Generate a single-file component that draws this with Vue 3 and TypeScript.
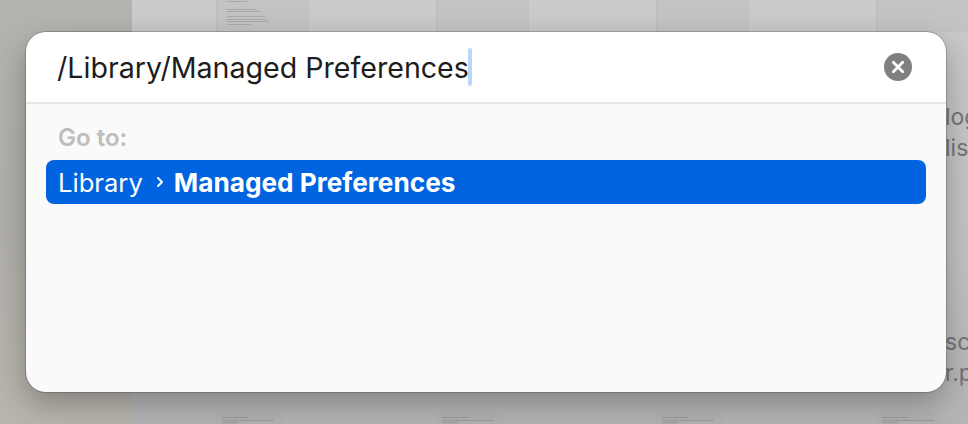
<script setup lang="ts">
const bottomThumbs = [0, 1, 2, 3]
const topThumbs = [
  { lines: [20, 0, 0, 30, 34, 0, 38, 40, 42, 24] },
  { lines: [] },
  { lines: [] },
  { lines: [] },
]
</script>

<template>
  <div class="stage">
    <aside class="sidebar"></aside>
    <main class="content">
      <div class="thumb-row top">
        <div v-for="(thumb, i) in topThumbs" :key="i" class="page-top">
          <div v-for="(w, j) in thumb.lines" :key="j" class="tiny" :style="{ width: w + 'px' }"></div>
        </div>
      </div>
      <div class="labels">
        <div class="label-group first"><span>log</span><span>lis</span></div>
        <div class="label-group second"><span>sc</span><span>r.p</span></div>
      </div>
      <div class="thumb-row bottom">
        <div v-for="n in bottomThumbs" :key="n" class="page-bottom">
          <div class="tiny wide"></div>
          <div class="tiny wider"></div>
          <div class="tiny short"></div>
        </div>
      </div>
    </main>

    <section class="dialog">
      <header class="search">
        <div class="field">
          <span class="path">/Library/Managed Preferences</span><span class="caret"></span>
        </div>
        <button class="clear" aria-label="Clear">
          <svg width="28" height="28" viewBox="0 0 28 28">
            <circle cx="14" cy="14" r="14" fill="#808080" />
            <path d="M9.3 9.3 18.7 18.7M18.7 9.3 9.3 18.7" stroke="#fff" stroke-width="2.7" stroke-linecap="round" fill="none" />
          </svg>
        </button>
      </header>
      <div class="results">
        <div class="goto">Go to:</div>
        <div class="row">
          <span class="crumb">Library</span>
          <svg class="chevron" width="8" height="12" viewBox="0 0 8 12">
            <path d="M2 2 6 6 2 10" stroke="#fff" stroke-width="2" stroke-linecap="round" stroke-linejoin="round" fill="none" />
          </svg>
          <span class="current">Managed Preferences</span>
        </div>
      </div>
    </section>
  </div>
</template>

<style scoped>
.stage {
  position: relative;
  display: flex;
  width: 968px;
  height: 424px;
  overflow: hidden;
  font-family: Inter, "Liberation Sans", sans-serif;
}
.sidebar {
  width: 132px;
  flex: none;
  background: linear-gradient(180deg, #b4b3af 0%, #b0aeaa 50%, #b8b5ad 100%);
}
.content {
  flex: 1;
  display: flex;
  flex-direction: column;
  background: linear-gradient(180deg, #cbcbcb 0%, #c8c8c8 10%, #c2c2c2 60%, #b4b4b4 100%);
}
.thumb-row {
  display: flex;
  padding-left: 84px;
}
.thumb-row.top {
  height: 32px;
  flex: none;
  gap: 127px;
}
.page-top {
  width: 93px;
  flex: none;
  padding: 1px 0 0 10px;
  background: #c3c3c3;
  border-left: 1px solid #bcbcbc;
  border-right: 1px solid #c0c0c0;
  box-sizing: border-box;
}
.tiny {
  height: 1px;
  margin-bottom: 1.5px;
  background: #a8a8a8;
}
.labels {
  flex: 1;
  display: flex;
  flex-direction: column;
  align-items: flex-start;
  padding: 70px 0 0 813px;
  color: #757575;
  font-size: 23px;
  line-height: 31px;
}
.label-group {
  display: flex;
  flex-direction: column;
}
.label-group.second {
  margin-top: 163px;
}
.thumb-row.bottom {
  height: 12px;
  flex: none;
  gap: 150px;
}
.page-bottom {
  width: 70px;
  flex: none;
  height: 12px;
  padding: 5px 0 0 6px;
  box-sizing: border-box;
  background: #b2b2b2;
  clip-path: polygon(0 0, 87% 0, 100% 100%, 0 100%);
}
.tiny.wide { width: 26px; background: #9a9a9a; }
.tiny.wider { width: 52px; background: #9a9a9a; }
.tiny.short { width: 16px; background: #9a9a9a; }
.dialog {
  position: absolute;
  left: 26px;
  top: 32px;
  width: 920px;
  height: 360px;
  display: flex;
  flex-direction: column;
  border-radius: 20px;
  overflow: hidden;
  background: #fafafa;
}
.stage::after {
  content: "";
  position: absolute;
  left: 26px;
  top: 32px;
  width: 920px;
  height: 360px;
  border-radius: 20px;
  box-shadow: 0 0 0 1px rgba(0, 0, 0, 0.18), 0 12px 30px rgba(0, 0, 0, 0.28);
  pointer-events: none;
}
.search {
  height: 70px;
  flex: none;
  display: flex;
  align-items: center;
  justify-content: space-between;
  padding: 0 34px 0 31px;
  background: #fff;
  border-bottom: 2px solid #e6e6e6;
}
.field {
  display: flex;
  align-items: center;
}
.path {
  color: #1d1d1d;
  font-size: 28.6px;
  line-height: 38px;
  position: relative;
  top: 1px;
}
.caret {
  width: 4px;
  height: 38px;
  margin-left: -1px;
  border-radius: 2px;
  background: #bdd5f8;
}
.clear {
  width: 28px;
  height: 28px;
  padding: 0;
  border: 0;
  background: none;
  display: block;
}
.clear svg {
  display: block;
}
.results {
  flex: 1;
  padding: 18px 20px 0;
}
.goto {
  padding-left: 12px;
  color: #bdbdbd;
  font-size: 24px;
  font-weight: 600;
  line-height: 32px;
  margin-bottom: 6px;
}
.row {
  height: 44px;
  display: flex;
  align-items: center;
  padding-left: 12px;
  border-radius: 8px;
  background: #0064e1;
  color: #fff;
  font-size: 25.6px;
}
.chevron {
  margin: 0 10px 0 13px;
  flex: none;
}
.current {
  font-size: 26.2px;
  font-weight: 700;
}
</style>
